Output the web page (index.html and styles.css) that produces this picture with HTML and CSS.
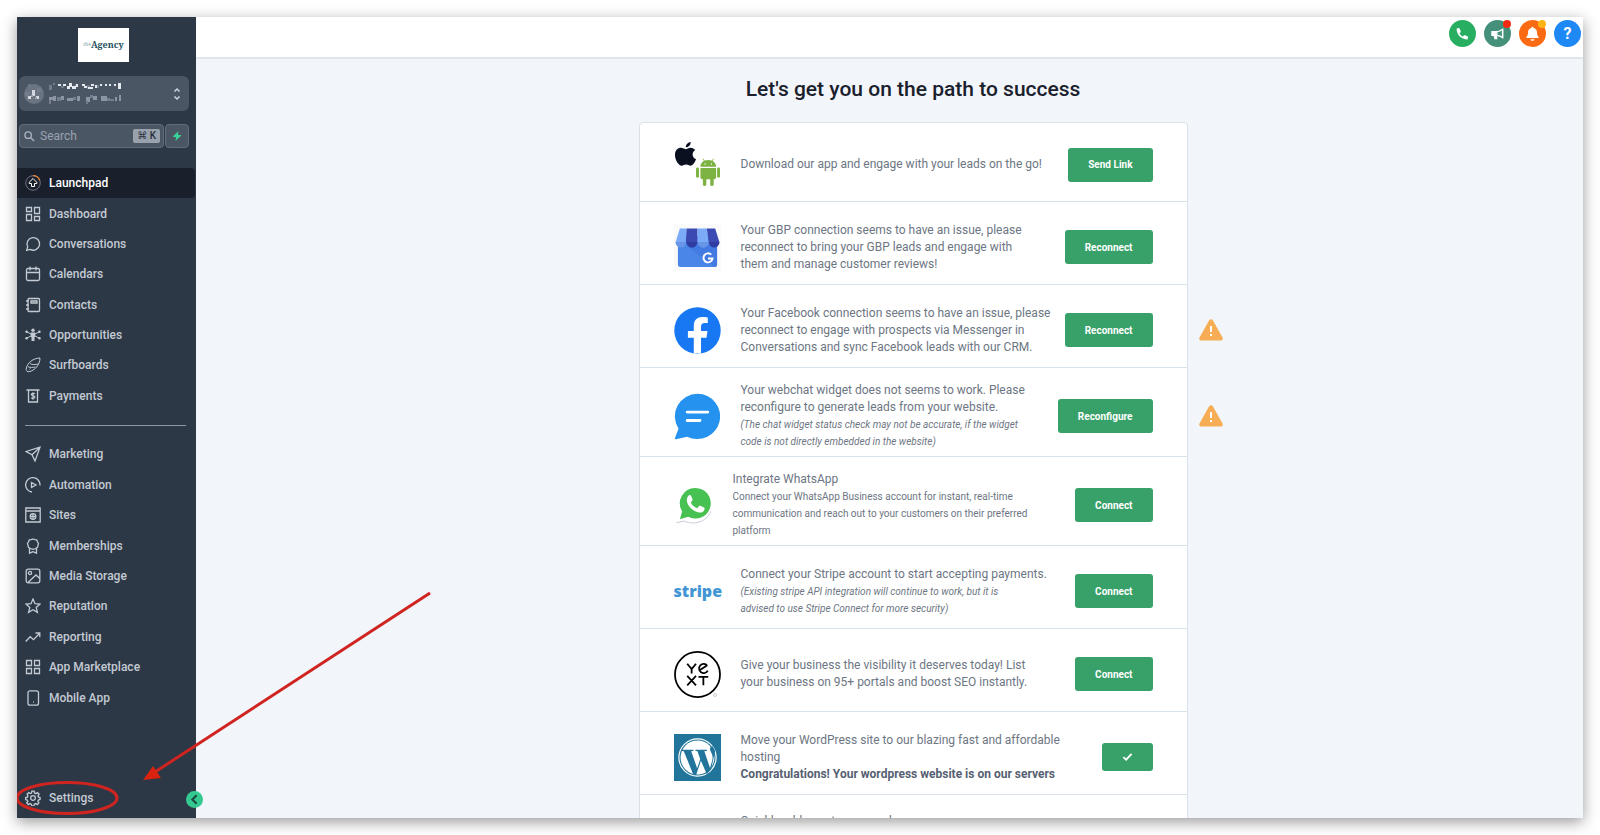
FILE: index.html
```html
<!DOCTYPE html>
<html lang="en">
<head>
<meta charset="utf-8">
<title>Launchpad</title>
<link rel="stylesheet" href="styles.css">
</head>
<body>
<div class="window">
  <aside class="sidebar">
    <div class="brand"><span class="brand-the">the</span>Agency</div>
    <button class="account" type="button" aria-label="Switch account">
      <svg class="avatar" viewBox="0 0 20 20"><circle cx="10" cy="10" r="10" fill="#6b7482"/><path d="M4 0h3v3H4zM13 4h4v4h-4zM1 8h4v4H1z" fill="#7a8391" opacity=".6"/><path d="M8 6h3v6H8zM4 12h3v3H4zM12 12h3v3h-3z" fill="#d5d9df"/><path d="M7 11h2v2H7zM11 13h2v2h-2z" fill="#9aa2ae"/></svg>
      <svg class="mosaic" viewBox="0 0 72 22"><g fill="#727b89"><path d="M0 2h3v5H0zM4 0h2v2H4zM12 3h3v2h-3zM26 1h3v3h-3zM38 2h3v4h-3zM48 2h2v3h-2z"/></g><g fill="#8d95a3"><path d="M0 14h4v3H0zM4 13h3v5H4zM12 13h3v4h-3zM18 15h6v3h-6zM28 13h3v5h-3zM37 14h4v5h-4zM44 13h4v4h-4zM52 13h6v5h-6zM66 14h2v4h-2zM70 12h2v6h-2z"/></g><g fill="#747d8b"><path d="M8 14h4v4H8zM24 14h3v3h-3zM0 17h2v4H0zM41 12h3v3h-3zM37 18h2v3h-2zM58 15h3v3h-3zM60 16h5v2h-5z"/></g><g fill="#e6e9ed"><path d="M9 1h3v2H9zM14 1h3v2h-3zM18 3h3v3h-3zM20 0h3v4h-3zM23 3h4v3h-4zM27 1h2v3h-2zM33 1h3v2h-3zM35 3h3v2h-3zM39 4h5v2h-5zM42 1h3v2h-3zM46 2h2v3h-2zM51 1h2v2h-2zM56 1h2v2h-2zM60 1h2v2h-2zM65 1h2v2h-2zM69 0h3v6h-3z"/></g></svg>
      <svg class="updown" viewBox="0 0 8 14"><path d="M1.500 4.500L4 2l2.500 2.500M1.500 9.500L4 12l2.500-2.500"/></svg>
    </button>
    <div class="search-row">
      <label class="search">
        <svg class="search-icon" viewBox="0 0 12 12"><circle cx="4.500" cy="4.500" r="3.500"/><path d="M7.300 7.300L11 11"/></svg>
        <input type="text" placeholder="Search" aria-label="Search">
        <kbd>⌘ K</kbd>
      </label>
      <button class="quick" type="button" aria-label="Quick actions"><svg viewBox="0 0 12 12"><path d="M7.500 1L1.500 6.800l3.600.4L4.500 11l6-5.800-3.600-.4z"/></svg></button>
    </div>
    <nav class="nav">
      <ul class="nav-group nav-main">
        <li><a class="active" href="#"><svg viewBox="0 0 16 16"><circle cx="8" cy="8" r="7.300" stroke="#6a7280" stroke-width="1"/><path d="M8 .7A7.300 7.300 0 0 1 14.800 5.500" stroke="#e8833a"/><path stroke-width="1" d="M8 3.500L4.200 7.300v1.200h2.300v3h3v-3h2.300V7.300z"/></svg>Launchpad</a></li>
        <li><a href="#"><svg viewBox="0 0 16 16"><path d="M1.500 1.500h5v4h-5zM9.500 1.500h5v6h-5zM1.500 8.500h5v6h-5zM9.500 10.500h5v4h-5z"/></svg>Dashboard</a></li>
        <li><a href="#"><svg viewBox="0 0 16 16"><path d="M1.700 14.300l1-3.500a6.300 6.300 0 1 1 2.500 2.600z"/></svg>Conversations</a></li>
        <li><a href="#"><svg viewBox="0 0 16 16"><rect x="1.500" y="2.500" width="13" height="12" rx="1.500"/><path d="M1.500 6.500h13M5 .5v4M11 .5v4"/></svg>Calendars</a></li>
        <li><a href="#"><svg viewBox="0 0 16 16"><rect x="3" y="1.500" width="11.500" height="13" rx="1"/><path d="M6 4h6v2H6zM1 4h3M1 8h3M1 12h3"/></svg>Contacts</a></li>
        <li><a href="#"><svg viewBox="0 0 16 16"><path d="M2 5l4 2M14 5l-4 2M2 11l4-2M14 11l-4-2" stroke-width="1"/><g fill="currentColor" stroke="none"><circle cx="8" cy="3.200" r="1.700"/><path d="M5.700 5.500h4.600V10h-.8v4h-3v-4h-.8z"/><circle cx="1.600" cy="4.800" r="1.300"/><circle cx="14.400" cy="4.800" r="1.300"/><circle cx="1.600" cy="11.200" r="1.300"/><circle cx="14.400" cy="11.200" r="1.300"/></g></svg>Opportunities</a></li>
        <li><a href="#"><svg viewBox="0 0 16 16"><path d="M15 1C9 1 1.500 5.500 1.200 12.500c0 1.500 1.200 2.500 2.800 2.200C9.500 13.700 15 8 15 1zM5 6.500c2.500 1.500 5 1.300 8 .5M3 9.800c2.500.8 4.500.8 7.500.2M4.500 12.300l1-.8" stroke-width="1"/></svg>Surfboards</a></li>
        <li><a href="#"><svg viewBox="0 0 16 16"><path d="M1.500 2h13M3.500 2v12h9V2"/><path d="M9.900 6c-.5-.7-3.600-1-3.600.6s3.600.8 3.600 2.500-3.100 1.400-3.700.6M8 4.300v7.400" stroke-width="1.200"/></svg>Payments</a></li>
      </ul>
      <hr class="divider">
      <ul class="nav-group nav-tools">
        <li><a href="#"><svg viewBox="0 0 16 16"><path d="M15 1.200L1 5.500l6 3.200L10 15zM15 1.200L7 8.700"/></svg>Marketing</a></li>
        <li><a href="#"><svg viewBox="0 0 16 16"><path d="M7 15A7.200 7.200 0 1 1 15 8.500M6.500 5.500v5L11 8z"/></svg>Automation</a></li>
        <li><a href="#"><svg viewBox="0 0 16 16"><path d="M.8 1h14.400v14H.8zM.8 4h14.400"/><circle cx="8" cy="9.500" r="2.800"/><path d="M5.200 9.500h5.600M8 6.700v5.600"/></svg>Sites</a></li>
        <li><a href="#"><svg viewBox="0 0 16 16"><path d="M8 1l1.800.7 1.900.2.800 1.800 1 1.800-.5 1.900-.5 1.900-1.700 1.200L8 11.400l-2.800-.9-1.700-1.200L3 7.400l-.5-1.900 1-1.800.8-1.800 1.900-.2zM4.500 10v5.200L8 13.700l3.500 1.500V10"/></svg>Memberships</a></li>
        <li><a href="#"><svg viewBox="0 0 16 16"><rect x="1.200" y="1.200" width="13.600" height="13.600" rx="2"/><circle cx="5" cy="5" r="1.600"/><path d="M3 14.500l8-7.500 3.700 3.500"/></svg>Media Storage</a></li>
        <li><a href="#"><svg viewBox="0 0 16 16"><path d="M8 1l2 4.700 5 .4-3.800 3.300 1.200 5L8 11.700l-4.400 2.700 1.200-5L1 6.100l5-.4z"/></svg>Reputation</a></li>
        <li><a href="#"><svg viewBox="0 0 16 16"><path d="M.7 12.500l4.500-4.800 3.300 3 6-6.200M10.500 4h4.300v4.300"/></svg>Reporting</a></li>
        <li><a href="#"><svg viewBox="0 0 16 16"><path d="M1.500 1.500h5v5h-5zM9.500 1.500h5v5h-5zM1.500 9.500h5v5h-5zM9.500 9.500h5v5h-5z"/></svg>App Marketplace</a></li>
        <li><a href="#"><svg viewBox="0 0 16 16"><rect x="3" y=".8" width="10.500" height="14.400" rx="2"/><path d="M8 12h.8"/></svg>Mobile App</a></li>
      </ul>
      <a class="settings" href="#"><svg viewBox="0 0 24 24"><path stroke-width="2" d="M12 8.500a3.500 3.500 0 1 0 0 7 3.500 3.500 0 0 0 0-7zM10.300 1.800h3.400l.6 2.800 2 .9 2.400-1.600 2.400 2.400-1.600 2.400.9 2 2.200.6v2.900l-2.400.8-.9 2 1.500 2.400-2.400 2.400-2.400-1.500-2 .9-.6 2.600h-3.300l-.7-2.600-2-.9-2.400 1.500-2.400-2.400 1.600-2.400-.9-2-2.300-.7v-2.900l2.500-.7.8-2L3.200 6.300l2.400-2.400L8 5.400l1.700-.8z"/></svg>Settings</a>
    </nav>
  </aside>
  <button class="collapse" type="button" aria-label="Collapse sidebar"><svg viewBox="0 0 16 16"><path d="M10 4L6 8l4 4"/></svg></button>

  <div class="content">
    <header class="topbar">
      <button class="round phone" type="button" aria-label="Call"><svg viewBox="0 0 24 24"><path fill="#fff" d="M5 3.200c1-.4 2.100 0 2.500 1l1.600 3.900c.3.800.1 1.600-.5 2.100L7.200 11.400c1.200 2.400 3 4.200 5.400 5.400l1.200-1.400c.5-.6 1.300-.8 2.100-.5l3.900 1.600c1 .4 1.400 1.500 1 2.500l-.7 1.600c-.3.700-1 1.100-1.800 1C9.500 20.500 3.500 14.500 2.400 5.700c-.1-.8.300-1.500 1-1.800z"/></svg></button>
      <button class="round news" type="button" aria-label="Announcements"><svg viewBox="0 0 24 24"><path fill="#fff" d="M2 8h9c4-.3 7-2.300 9-4h1.500v16H20c-2-1.700-5-3.400-9-3.700L12 21H7l-1.200-5H2z"/><path fill="#44907a" d="M12 10c3-.4 5-1.500 7-2.800v9.500c-2-1.300-4-2.300-7-2.700z"/></svg><span class="dot red"></span></button>
      <button class="round bell" type="button" aria-label="Notifications"><svg viewBox="0 0 24 24"><path fill="#fff" d="M12 1c.9 0 1.600.6 1.600 1.500v.7c3.400.7 5.600 3.200 5.600 6.800 0 4 .8 5.500 2.300 7 .8.900.2 2.300-1 2.300h-17c-1.200 0-1.800-1.400-1-2.300 1.500-1.500 2.300-3 2.300-7 0-3.600 2.200-6.100 5.600-6.800v-.7C10.400 1.600 11.100 1 12 1zM9 21h6c0 1.600-1.300 2.700-3 2.700S9 22.600 9 21z"/></svg><span class="dot amber"></span></button>
      <button class="round help" type="button" aria-label="Help">?</button>
    </header>
    <main class="page">
      <h1>Let's get you on the path to success</h1>
      <ul class="card">
        <li class="row short">
          <svg class="logo" viewBox="0 0 48 48"><path fill="#0b1020" d="M17 1c.3 2.800-2 5.400-5 5.500C11.900 3.800 14.300 1.300 17 1zM12 8.300c1.300 0 2.700-1.500 5-1.500 2 0 3.700 1 4.700 2.500-4 2.500-3.300 7.800.8 9.400-1.200 3.200-3.300 6.500-5.600 6.500-1.800 0-2.400-1.100-4.500-1.100s-2.800 1.100-4.500 1.100C4.600 25.200 1 19.400 1 14.300 1 9.500 4 7 7 7c2 0 3.700 1.300 5 1.300z"/><g fill="#7cb342"><path d="M27 27.500h16V37a2 2 0 0 1-2 2H29a2 2 0 0 1-2-2zM27 26.200c0-3.700 3-6.700 8-6.700s8 3 8 6.700z"/><rect x="22.500" y="27" width="3" height="10.500" rx="1.500"/><rect x="44" y="27" width="3" height="10.500" rx="1.500"/><rect x="29.500" y="36" width="3.500" height="10" rx="1.500"/><rect x="37" y="36" width="3.500" height="10" rx="1.500"/></g><path d="M29.500 18l2 3M40.500 18l-2 3" stroke="#7cb342" stroke-width=".8"/><circle cx="31.800" cy="23.500" r=".7" fill="#fff"/><circle cx="38.200" cy="23.500" r=".7" fill="#fff"/></svg>
          <p class="text">Download our app and engage with your leads on the go!</p>
          <button class="btn" type="button">Send Link</button>
        </li>
        <li class="row">
          <svg class="logo" viewBox="0 0 48 48"><path fill="#fafafb" d="M0 0h48v48H0z"/><rect x="4" y="12" width="40" height="32" rx="2.500" fill="#4a86e8"/><path d="M13 22l28 22h1.500a2 2 0 0 0 1.500-2V22z" fill="#3f73dc" opacity=".6"/><path fill="#7baaf7" d="M6 4.500h7V19H1.500z"/><path fill="#3b49b3" d="M13 4.500h11V19H12z"/><path fill="#7baaf7" d="M24 4.500h9.500L36 19H24z"/><path fill="#3b49b3" d="M33.500 4.500H42L46.500 19H35.500z"/><path fill="#6795e8" d="M1.500 18.500h11a5.500 5.500 0 0 1-11 0zM24 18.500h11.500a5.700 5.700 0 0 1-11.500 0z"/><path fill="#2f3da3" d="M12.500 18.500H24a5.700 5.700 0 0 1-11.500 0zM35.500 18.500h11a5.500 5.500 0 0 1-11 0z"/><path d="M38 31.300a4.600 4.600 0 1 0 1.300 4H34.700" fill="none" stroke="#fff" stroke-width="2"/></svg>
          <p class="text">Your GBP connection seems to have an issue, please<br>reconnect to bring your GBP leads and engage with<br>them and manage customer reviews!</p>
          <button class="btn" type="button">Reconnect</button>
        </li>
        <li class="row">
          <svg class="logo" viewBox="0 0 48 48"><circle cx="24" cy="24" r="23.700" fill="#1877f2"/><path fill="#fff" d="M20.200 47.500V31.300h-6v-6.800h6v-5.200c0-6 3.500-9.200 9-9.200 2.600 0 5.300.5 5.300.5v5.800h-3c-3 0-3.900 1.800-3.900 3.700v4.400h6.600l-1 6.800h-5.600v16.200z"/></svg>
          <p class="text">Your Facebook connection seems to have an issue, please<br>reconnect to engage with prospects via Messenger in<br>Conversations and sync Facebook leads with our CRM.</p>
          <button class="btn" type="button">Reconnect</button>
          <svg class="warning" viewBox="0 0 24 22"><path fill="#f6ad55" d="M10 1.500a2.300 2.300 0 0 1 4 0l9.500 17a2 2 0 0 1-2 3h-19a2 2 0 0 1-2-3z"/><path d="M12 7v6M12 15v2" stroke="#fff" stroke-width="2"/></svg>
        </li>
        <li class="row">
          <svg class="logo" viewBox="0 0 48 48"><path fill="#2492ee" d="M24 .700a23.200 23.200 0 1 1-10.600 43.900L2 47.300c-1 .2-1.400-.6-1-1.400L4.600 36.500A23.200 23.200 0 0 1 24 .700z"/><path d="M13.500 19.500h21M13.500 28h13" stroke="#fff" stroke-width="3" stroke-linecap="round"/></svg>
          <p class="text">Your webchat widget does not seems to work. Please<br>reconfigure to generate leads from your website.<br><em>(The chat widget status check may not be accurate, if the widget<br>code is not directly embedded in the website)</em></p>
          <button class="btn" type="button">Reconfigure</button>
          <svg class="warning" viewBox="0 0 24 22"><path fill="#f6ad55" d="M10 1.500a2.300 2.300 0 0 1 4 0l9.500 17a2 2 0 0 1-2 3h-19a2 2 0 0 1-2-3z"/><path d="M12 7v6M12 15v2" stroke="#fff" stroke-width="2"/></svg>
        </li>
        <li class="row">
          <svg class="logo narrow" viewBox="0 0 40 40"><path d="M2.500 37.500l8-1.500c9 4 22 2 27.500-10" fill="none" stroke="#c9c9d6"/><path fill="#47c252" d="M22 2a15.700 15.700 0 1 1-7.500 29.500L6 34l2.400-8A15.700 15.700 0 0 1 22 2z"/><path fill="#fff" d="M15.500 9.500c.8-.3 1.700-.2 2.100.7l1.400 3.400c.2.600 0 1-.4 1.500l-1.300 1.700c1.200 3 3.500 4.800 6.700 6l1.700-2.200c.4-.5.9-.6 1.400-.3l3.600 1.700c.7.300.8.800.7 1.500-.4 2.700-3 4-5.400 3.700-6.500-.8-13-7.400-12.800-12.800 0-2.100.8-4.200 2.300-4.900z"/></svg>
          <p class="text">Integrate WhatsApp<br><small>Connect your WhatsApp Business account for instant, real-time<br>communication and reach out to your customers on their preferred<br>platform</small></p>
          <button class="btn" type="button">Connect</button>
        </li>
        <li class="row">
          <span class="logo stripe">stripe</span>
          <p class="text">Connect your Stripe account to start accepting payments.<br><em>(Existing stripe API integration will continue to work, but it is<br>advised to use Stripe Connect for more security)</em></p>
          <button class="btn" type="button">Connect</button>
        </li>
        <li class="row">
          <svg class="logo" viewBox="0 0 48 48"><g fill="none" stroke="#000" stroke-width="1.800"><circle cx="24" cy="24" r="23"/><path d="M13.500 13l4.500 5.500 4.500-5.500M18 18.500V23M13.500 25.500l9 9.500M22.500 25.500l-9 9.500M25 26.400h10M30 26.400V35M26.500 19.500l7.500-5M34 15a4.700 4.700 0 1 0 .5 5"/></g><circle cx="42" cy="45" r="1.500" fill="none" stroke="#bbb" stroke-width=".8"/></svg>
          <p class="text">Give your business the visibility it deserves today! List<br>your business on 95+ portals and boost SEO instantly.</p>
          <button class="btn" type="button">Connect</button>
        </li>
        <li class="row">
          <svg class="logo" viewBox="0 0 48 48"><path fill="#21759b" d="M0 0h48v48H0z"/><circle cx="24" cy="24" r="19" fill="none" stroke="#fff" stroke-width="1.200"/><circle cx="24" cy="24" r="17.300" fill="#fff"/><path fill="#21759b" d="M8 16h12v1.200l-2.400.3 6 17.500 3.200-9.300-2.800-8-2.200-.5V16h12v1.200l-2.800.3 5.800 17.300 1.800-6.300c1.800-5.500.3-8-1-10.300-1.500-2.600-1-5.500 1.800-5.700L42 17l-4 19-4.500 5-6-13.700L22.500 42l-3-1L10 17.500l-2-.3z"/></svg>
          <p class="text">Move your WordPress site to our blazing fast and affordable<br>hosting<br><strong>Congratulations! Your wordpress website is on our servers</strong></p>
          <button class="btn done" type="button" aria-label="Done"><svg viewBox="0 0 12 10"><path d="M1.500 5.200L4.500 8l6-6.300"/></svg></button>
        </li>
        <li class="row last">
          <span class="logo"></span>
          <p class="text">Quickly add your team members</p>
        </li>
      </ul>
    </main>
  </div>
  <svg class="annotation" viewBox="0 0 420 230"><g fill="none" stroke="#cf2420" stroke-width="3"><path d="M413 5L138 184"/><ellipse cx="50" cy="210" rx="50" ry="15.500"/></g><path fill="#d9230f" d="M126 192l10-14 8 12z"/></svg>
</div>
</body>
</html>
```
FILE: styles.css
```css
* { box-sizing: border-box; }
body { margin: 0; padding: 17px; background: #fff; font-family: Roboto, "Liberation Sans", sans-serif; font-size: 12px; }
ul { list-style: none; margin: 0; padding: 0; }
a { color: inherit; text-decoration: none; }
button { border: 0; font: inherit; cursor: pointer; padding: 0; }
.window { position: relative; display: flex; height: calc(100vh - 34px); min-height: 700px; box-shadow: 0 4px 14px rgba(0,0,0,.4); background: #f2f6fa; }
.sidebar { flex: 0 0 179px; min-width: 0; display: flex; flex-direction: column; background: #2d3846; color: #c3cad3; }
.brand { width: 51px; height: 34px; margin: 11px 0 14px 61px; background: #fff; color: #23505c; font: bold 9px/32px "Noto Serif", "Liberation Serif", serif; text-align: center; }
.brand-the { font-size: 5px; font-weight: normal; vertical-align: 2px; color: #7ba0a4; }
.account { display: flex; align-items: center; gap: 5px; height: 35px; margin: 0 7px 13px 2px; padding: 0 8px 0 5px; border-radius: 6px; background: #4b5665; }
.avatar { width: 20px; height: 20px; }
.mosaic { width: 72px; height: 22px; }
.updown { width: 8px; height: 14px; margin-left: auto; fill: none; stroke: #d0d5dc; stroke-width: 1.5; }
.search-row { display: flex; gap: 1px; height: 24px; margin: 0 7px 20px 2px; }
.search { flex: 1; display: flex; align-items: center; min-width: 0; padding: 0 3px 0 4px; gap: 5px; border: 1px solid #626c7a; border-radius: 4px; background: #4b5665; }
.search-icon { flex: none; width: 11px; height: 11px; fill: none; stroke: #aab1bc; stroke-width: 1.5; }
.search input { flex: 1; width: 0; min-width: 0; border: 0; padding: 0; background: none; outline: 0; color: #fff; font: 12px Roboto, sans-serif; }
.search input::placeholder { color: #9aa3b0; opacity: 1; }
kbd { flex: none; padding: 0 4px; border-radius: 2px; background: #99a1ad; color: #28313e; font: 500 10px/14px Roboto, "DejaVu Sans", sans-serif; }
.quick { flex: 0 0 24px; border: 1px solid #626c7a; border-radius: 4px; background: #4b5665; }
.quick svg { display: block; width: 12px; margin: auto; fill: #38d39b; }
.nav { flex: 1; display: flex; flex-direction: column; }
.nav-group { display: grid; grid-auto-rows: 1fr; }
.nav-main { height: 243px; }
.nav-tools { height: 274px; }
.divider { width: 161px; height: 1px; margin: 14px 0 13px 8px; border: 0; background: #8d97a5; }
.nav a { display: flex; align-items: center; gap: 8px; height: 100%; padding-left: 8px; font-weight: 500; }
.nav a.active { margin-right: 1px; border-radius: 0 4px 4px 0; background: #1a1f2c; color: #fff; }
.nav svg { flex: none; width: 16px; height: 16px; fill: none; stroke: currentColor; stroke-width: 1.3; }
.nav a.settings { height: 30px; margin: auto 0 5px; }
.collapse { position: absolute; left: 169px; bottom: 10px; width: 17px; height: 17px; border-radius: 50%; background: #34c990; }
.collapse svg { display: block; width: 17px; fill: none; stroke: #1d4a40; stroke-width: 2; }
.content { flex: 1; min-width: 0; display: flex; flex-direction: column; }
.topbar { flex: 0 0 42px; display: flex; justify-content: flex-end; gap: 8px; padding: 3px 2px 0 0; border-bottom: 2px solid #e0e6ec; background: #fff; }
.round { position: relative; display: grid; place-items: center; width: 27px; height: 27px; border-radius: 50%; color: #fff; }
.round svg { width: 15px; height: 15px; }
.phone { background: #27ae60; }
.news { background: #44907a; }
.bell { background: #fb6b14; }
.help { background: #1e88f5; font-size: 16px; font-weight: 700; }
.dot { position: absolute; top: 0; right: 0; width: 8px; height: 8px; border-radius: 50%; }
.red { background: #f42a12; }
.amber { background: #fdb515; }
.page { flex: 1; min-height: 0; overflow: hidden; padding: 17px 0 0 47px; }
h1 { margin: 0 0 19px; color: #1a202c; font-size: 21px; line-height: 27px; font-weight: 500; text-align: center; }
.card { width: 549px; margin: 0 auto; border: 1px solid #d9e2ea; border-radius: 4px; background: #fff; }
.row { position: relative; display: flex; align-items: center; gap: 20px; min-height: 83px; padding: 14px 34px 6px; border-bottom: 1px solid #d9e2ea; }
.row.short { min-height: 79px; padding-top: 11px; }
.row.last { align-items: flex-start; padding-top: 18px; }
.logo { flex: none; width: 47px; height: 47px; }
.logo.narrow { width: 39px; height: 39px; }
.text { flex: 1; min-width: 0; margin: 0; color: #6d7683; line-height: 17px; white-space: nowrap; }
.text em, .text small { font-size: 10px; }
.text strong { color: #566072; }
.stripe { color: #4296d5; font: 800 16px/47px "Open Sans", sans-serif; }
.btn { flex: none; height: 34px; padding: 0 20px; border-radius: 3px; background: #38a169; color: #fff; font-size: 10px; font-weight: 700; }
.btn.done { height: 28px; }
.done svg { display: block; width: 11px; height: 10px; fill: none; stroke: #fff; stroke-width: 2; }
.warning { position: absolute; left: calc(100% + 12px); width: 24px; height: 22px; }
.annotation { position: absolute; left: 0; bottom: 0; width: 420px; height: 230px; pointer-events: none; }
```
